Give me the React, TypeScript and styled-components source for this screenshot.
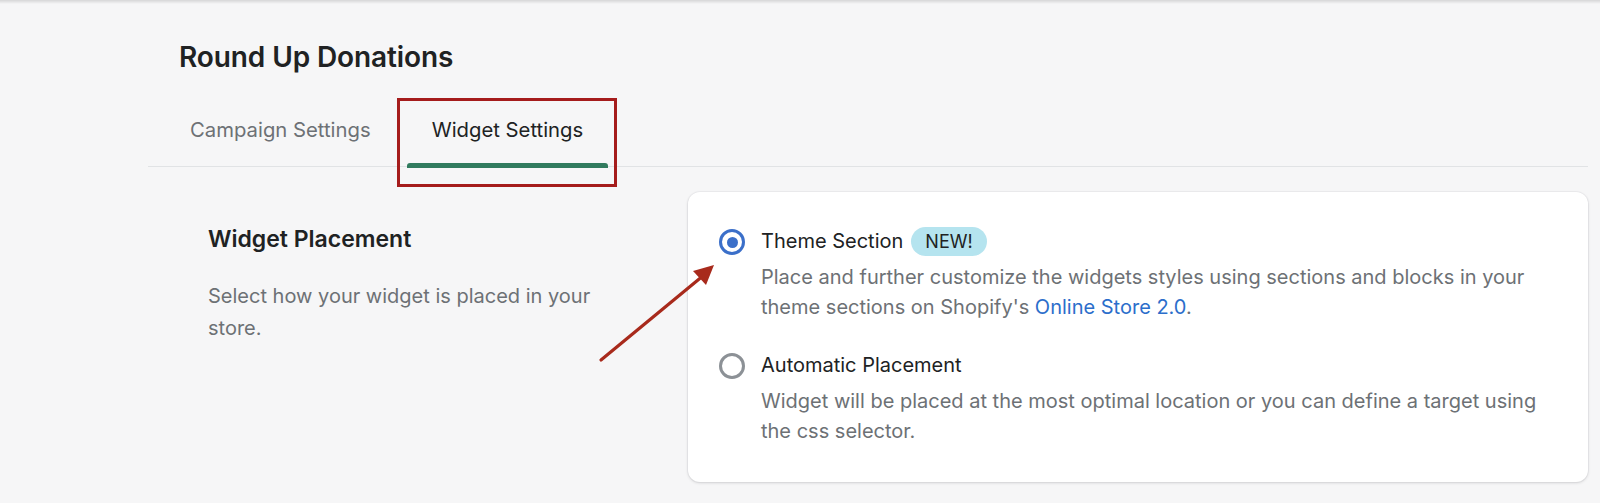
import React from "react";
import styled, { createGlobalStyle } from "styled-components";

const GlobalStyle = createGlobalStyle`
  html, body {
    margin: 0;
    padding: 0;
    background: #f6f6f7;
  }
  body {
    font-family: Inter, "Noto Sans", "Liberation Sans", sans-serif;
    color: #202223;
    -webkit-font-smoothing: antialiased;
  }
  * { box-sizing: border-box; }
`;

const Page = styled.div`
  position: relative;
  width: 1600px;
  height: 503px;
  overflow: hidden;
  background: #f6f6f7;
`;

const TopShadow = styled.div`
  height: 4px;
  background: linear-gradient(#d6d6d7, #f6f6f7);
`;

const Main = styled.div`
  margin: 0 12px 0 148px;
`;

const Title = styled.h1`
  margin: 33px 0 0 31px;
  font-size: 28px;
  line-height: 40px;
  font-weight: 600;
  letter-spacing: -0.1px;
  color: #202223;
`;

const TabBar = styled.div`
  margin-top: 21px;
  display: flex;
  gap: 11px;
  padding-left: 17px;
  border-bottom: 1px solid #e1e3e5;
  height: 69px;
`;

const Tab = styled.div<{ $active?: boolean }>`
  position: relative;
  padding: 18px 25px 0;
  font-size: 20.3px;
  line-height: 28px;
  color: ${(p) => (p.$active ? "#202223" : "#6d7175")};
  &::after {
    content: "";
    display: ${(p) => (p.$active ? "block" : "none")};
    position: absolute;
    left: 0;
    right: 0;
    bottom: -2px;
    height: 5px;
    border-radius: 3px 3px 0 0;
    background: #317b5e;
  }
`;

const Highlight = styled.span`
  position: absolute;
  top: 0;
  left: -10px;
  right: -9px;
  bottom: -21px;
  border: 3px solid #a51c1c;
  pointer-events: none;
`;

const Layout = styled.div`
  display: flex;
  align-items: flex-start;
  margin-top: 25px;
  padding-left: 60px;
`;

const Annotation = styled.div`
  width: 420px;
  flex: none;
  padding-top: 33px;
  margin-right: 60px;
`;

const SectionHeading = styled.h2`
  margin: 0;
  font-size: 23px;
  line-height: 29px;
  font-weight: 600;
  color: #202223;
`;

const SubText = styled.p`
  margin: 26px 0 0;
  font-size: 20px;
  line-height: 32px;
  color: #6d7175;
`;

const Card = styled.div`
  flex: 1;
  background: #ffffff;
  border-radius: 12px;
  box-shadow: 0 0 0 1px rgba(63, 63, 68, 0.04), 0 1px 3px rgba(63, 63, 68, 0.18);
  padding: 35px 31px 36px;
  display: flex;
  flex-direction: column;
  gap: 29px;
`;

const Choice = styled.div`
  display: grid;
  grid-template-columns: 26px 1fr;
  column-gap: 16px;
`;

const RadioMark = styled.span<{ $checked?: boolean }>`
  width: 26px;
  height: 26px;
  margin-top: 2px;
  border-radius: 50%;
  border: 3px solid ${(p) => (p.$checked ? "#3b6fc9" : "#8c9196")};
  display: flex;
  align-items: center;
  justify-content: center;
  &::after {
    content: "";
    width: 11px;
    height: 11px;
    border-radius: 50%;
    background: #3b6fc9;
    display: ${(p) => (p.$checked ? "block" : "none")};
  }
`;

const ChoiceLabel = styled.div`
  display: flex;
  align-items: center;
  gap: 8px;
  font-size: 20px;
  line-height: 29px;
  color: #202223;
`;

const Badge = styled.span`
  display: inline-flex;
  align-items: center;
  height: 29px;
  padding: 0 14px;
  border-radius: 15px;
  background: #b5e4ef;
  color: #202223;
  font-size: 18px;
`;

const ChoiceHelp = styled.p`
  grid-column: 2;
  margin: 6px 0 0;
  font-size: 20px;
  line-height: 30px;
  color: #6d7175;
`;

const Link = styled.a`
  color: #2c6ecb;
  text-decoration: none;
`;

const ArrowSvg = styled.svg`
  position: absolute;
  left: 580px;
  top: 240px;
  width: 150px;
  height: 130px;
  overflow: visible;
  pointer-events: none;
`;

export default function App() {
  return (
    <Page>
      <GlobalStyle />
      <TopShadow />
      <Main>
        <Title>Round Up Donations</Title>
        <TabBar>
          <Tab>Campaign Settings</Tab>
          <Tab $active>
            Widget Settings
            <Highlight />
          </Tab>
        </TabBar>
        <Layout>
          <Annotation>
            <SectionHeading>Widget Placement</SectionHeading>
            <SubText>Select how your widget is placed in your store.</SubText>
          </Annotation>
          <Card>
            <Choice>
              <RadioMark $checked />
              <ChoiceLabel>
                Theme Section <Badge>NEW!</Badge>
              </ChoiceLabel>
              <ChoiceHelp>
                Place and further customize the widgets styles using sections and blocks in your
                theme sections on Shopify's <Link href="#">Online Store 2.0</Link>.
              </ChoiceHelp>
            </Choice>
            <Choice>
              <RadioMark />
              <ChoiceLabel>Automatic Placement</ChoiceLabel>
              <ChoiceHelp>
                Widget will be placed at the most optimal location or you can define a target using
                the css selector.
              </ChoiceHelp>
            </Choice>
          </Card>
        </Layout>
      </Main>
      <ArrowSvg viewBox="0 0 150 130">
        <line x1="21" y1="120" x2="124" y2="35" stroke="#a82a1c" strokeWidth="3.2" strokeLinecap="round" />
        <polygon points="134,25 113,31 126,45" fill="#a82a1c" />
      </ArrowSvg>
    </Page>
  );
}
